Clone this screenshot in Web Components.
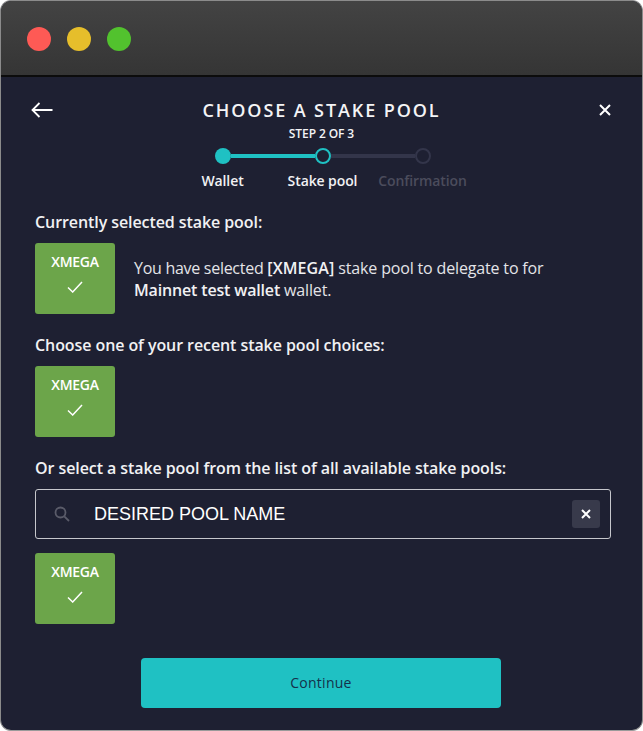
<!DOCTYPE html>
<html><head><meta charset="utf-8">
<style>html,body{margin:0;padding:0;background:#fff;width:643px;height:731px;overflow:hidden}body{font-family:"Open Sans",sans-serif}</style>
</head><body>
<template id="t-window"><style>
:host{display:flex;flex-direction:column;width:643px;height:731px;box-sizing:border-box;border-radius:11px;overflow:hidden;background:#1e2032;border:1px solid #8b8b8b;border-bottom-color:#9a9a9a;font-family:"Open Sans",sans-serif}
.bar{flex:none;height:76px;box-sizing:border-box;background:linear-gradient(#434343,#353535);border-bottom:2px solid #0c0c0c;display:flex;align-items:center;gap:16px;padding:2px 0 0 26px}
.bar i{width:24px;height:24px;border-radius:50%;display:block}
.body{flex:1;display:flex;flex-direction:column;min-height:0}
</style><div class="bar"><i style="background:#fe5a55"></i><i style="background:#e6be2b"></i><i style="background:#52c22e"></i></div><div class="body"><slot></slot></div></template>

<template id="t-head"><style>
:host{display:grid;grid-template-columns:80px 1fr 80px;padding-top:22px;height:62px;box-sizing:content-box;color:#fff}
.back{padding:3px 0 0 30px}.close{display:flex;justify-content:flex-end;padding:5px 31px 0 0;align-items:flex-start}
.c{text-align:center}
h1{margin:0;font:600 18px/22px "Open Sans",sans-serif;letter-spacing:1.9px;color:#f4f4f6}
p{margin:5px 0 0;font:600 12px/15px "Open Sans",sans-serif;letter-spacing:-.1px;color:#f4f4f6}
svg{display:block}
</style>
<div class="back"><svg width="22" height="16" viewBox="0 0 22 16" fill="none" stroke="#fff" stroke-width="1.8"><path d="M21.5 8H1.5M8.5 1L1.5 8l7 7"/></svg></div>
<div class="c"><h1>CHOOSE A STAKE POOL</h1><p>STEP 2 OF 3</p></div>
<div class="close"><svg width="12" height="12" viewBox="0 0 12 12" stroke="#fff" stroke-width="2"><path d="M1 1l10 10M11 1L1 11"/></svg></div></template>

<template id="t-steps"><style>
:host{display:block;height:47px;margin-top:-13px;padding-left:2px}
.track{display:flex;justify-content:center;align-items:center;height:16px}
.d{width:16px;height:16px;border-radius:50%;box-sizing:border-box;flex:none}
.l{width:84px;height:4px;flex:none}
.labels{display:flex;justify-content:center;margin-top:8px}
.labels span{width:100px;text-align:center;font:600 14px/18px "Open Sans",sans-serif;letter-spacing:-.1px;color:#f1f1f3}
.labels span.off{color:#4b4c5c}
</style>
<div class="track"><div class="d" style="background:#1fc1c3"></div><div class="l" style="background:#1fc1c3"></div><div class="d" style="border:2px solid #1fc1c3"></div><div class="l" style="background:#33354a"></div><div class="d" style="border:2px solid #33354a"></div></div>
<div class="labels"><span>Wallet</span><span>Stake pool</span><span class="off">Confirmation</span></div></template>

<template id="t-tile"><style>
:host{display:flex;flex-direction:column;align-items:center;flex:none;width:80px;height:71px;background:#6ca54a;border-radius:3px;color:#fff;box-sizing:border-box;padding-top:10px}
span{font:600 14px/18px "Open Sans",sans-serif;letter-spacing:-.3px}
svg{display:block;margin-top:10px}
</style><span>XMEGA</span><svg width="16" height="12" viewBox="0 0 16 12" fill="none" stroke="#fff" stroke-width="1.5"><path d="M1 6.5l4.7 4.5L15 1"/></svg></template>

<template id="t-section"><style>
:host{display:block;padding:0 31px 0 34px}
h2{margin:0 0 11px;font:600 16px/20px "Open Sans",sans-serif;letter-spacing:-.08px;color:#f1f1f3}
</style><h2><slot name="title"></slot></h2><slot></slot></template>

<template id="t-selected"><style>
:host{display:flex;align-items:center;gap:19px;font:400 16px/22px "Open Sans",sans-serif;letter-spacing:-.16px;color:#e4e4e8}
</style><slot name="tile"></slot><div class="t"><slot></slot></div></template>

<template id="t-search"><style>
:host{display:flex;align-items:center;height:50px;box-sizing:border-box;border:1px solid #c6c7cc;border-radius:3px;margin-bottom:14px;color:#fff;padding:0 10px 0 18px}
svg{display:block;flex:none}
.v{flex:1;margin-left:24px;font:400 18px/24px "Liberation Sans",Arial,sans-serif;color:#fff}
.x{width:28px;height:28px;border-radius:3px;background:#383a4b;display:flex;align-items:center;justify-content:center}
</style><svg width="16" height="16" viewBox="0 0 16 16" fill="none" stroke="#5a5b69" stroke-width="1.8"><circle cx="6.5" cy="6.5" r="5"/><path d="M10.3 10.3L15 15"/></svg><div class="v"><slot></slot></div><div class="x"><svg width="10" height="10" viewBox="0 0 10 10" stroke="#fff" stroke-width="2"><path d="M1 1l8 8M9 1L1 9"/></svg></div></template>

<template id="t-button"><style>
:host{display:flex;align-items:center;justify-content:center;width:360px;height:50px;background:#1fc1c3;border-radius:4px;color:#15304a;font:400 14px/20px "Open Sans",sans-serif;letter-spacing:.25px}
</style><slot></slot></template>

<x-window>
<x-head></x-head>
<x-steps></x-steps>
<x-section style="margin-top:17px"><span slot="title">Currently selected stake pool:</span>
<x-selected><x-tile slot="tile"></x-tile><span><span style="letter-spacing:-.28px">You have selected </span><b style="font-weight:600;color:#f1f1f3;letter-spacing:.1px">[XMEGA]</b> stake pool to delegate to for<br><b style="font-weight:600;color:#f1f1f3">Mainnet test wallet</b> wallet.</span></x-selected></x-section>
<x-section style="margin-top:21px"><span slot="title">Choose one of your recent stake pool choices:</span><x-tile></x-tile></x-section>
<x-section style="margin-top:21px"><span slot="title">Or select a stake pool from the list of all available stake pools:</span>
<x-search>DESIRED POOL NAME</x-search><x-tile></x-tile></x-section>
<div style="display:flex;justify-content:center;margin-top:34px;padding-right:1px"><x-button>Continue</x-button></div>
</x-window>
<script>
for (const n of ['window','head','steps','tile','section','selected','search','button']) {
  customElements.define('x-'+n, class extends HTMLElement {
    constructor(){super();this.attachShadow({mode:'open'}).appendChild(document.getElementById('t-'+n).content.cloneNode(true));}
  });
}
</script>
</body></html>
